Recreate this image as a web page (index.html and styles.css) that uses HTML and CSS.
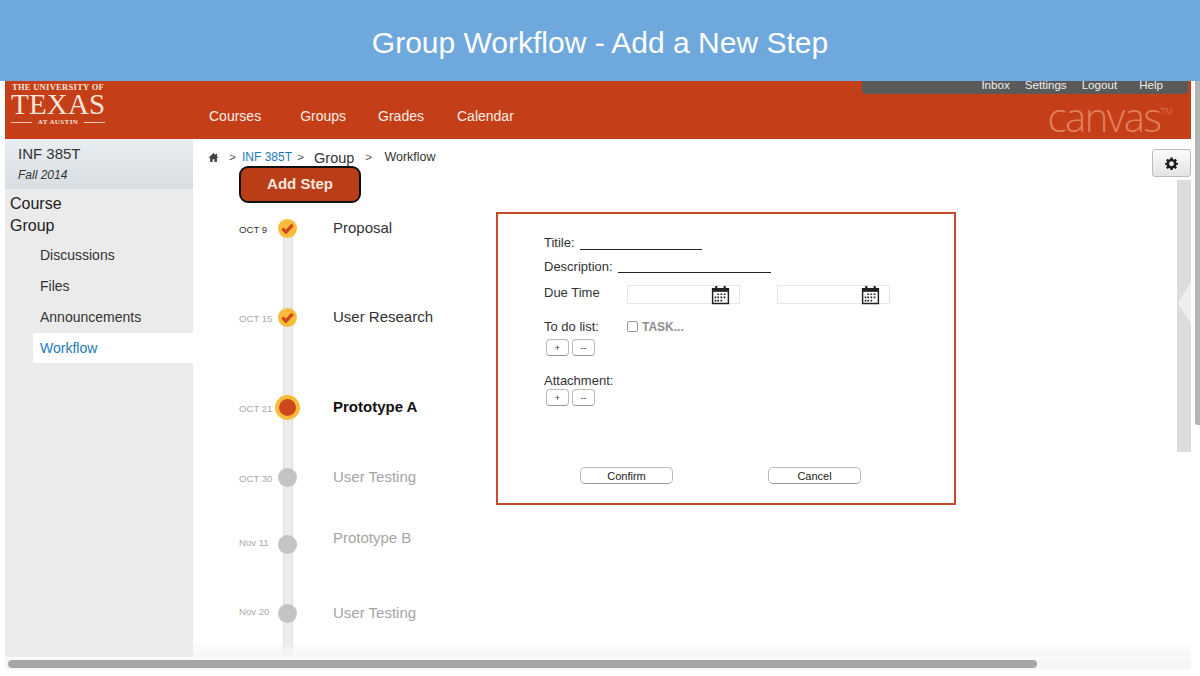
FILE: index.html
```html
<!DOCTYPE html>
<html lang="en">

<head>
    <title>Group Workflow - Add a New Step</title>
    <link rel="stylesheet" href="styles.css">
</head>

<body>
    <h1 class="banner">Group Workflow - Add a New Step</h1>

    <div class="app">
        <header class="topbar">
            <div class="logo">
                <div class="logo-top">THE UNIVERSITY OF</div>
                <div class="logo-main">TEXAS</div>
                <div class="logo-bottom"><i></i>AT AUSTIN<i></i></div>
            </div>
            <nav class="mainnav">
                <a>Courses</a>
                <a>Groups</a>
                <a>Grades</a>
                <a>Calendar</a>
            </nav>
            <div class="topright">
                <div class="usernav">
                    <a class="inbox">Inbox</a>
                    <a class="settings">Settings</a>
                    <a class="logout">Logout</a>
                    <a>Help</a>
                </div>
                <div class="brand">canvas<sup>TM</sup></div>
            </div>
        </header>

        <div class="columns">
            <aside class="sidebar">
                <div class="course">
                    <div class="course-name">INF 385T</div>
                    <div class="course-term">Fall 2014</div>
                </div>
                <div class="side-head">Course</div>
                <div class="side-head">Group</div>
                <ul class="sidelist">
                    <li>Discussions</li>
                    <li>Files</li>
                    <li>Announcements</li>
                    <li class="active">Workflow</li>
                </ul>
            </aside>

            <main class="content">
                <div class="crumbs">
                    <svg class="home" viewBox="0 0 12 12"><path d="M6 1 0.5 6.2H2.3V11H5V7.8H7V11H9.7V6.2H11.5L9.8 4.6V1.8H8.4V3.3Z"/></svg>
                    <span class="sep sep-first">&gt;</span>
                    <a class="crumb-link">INF 385T</a>
                    <span class="sep sep-tight">&gt;</span>
                    <span class="crumb-group">Group</span>
                    <span class="sep sep-wide">&gt;</span>
                    <span class="crumb-last">Workflow</span>
                </div>

                <button class="add-step" type="button">Add Step</button>

                <div class="body-row">
                    <ol class="timeline">
                        <li class="step step-1">
                            <span class="date date-now">OCT 9</span>
                            <span class="dot done"><svg viewBox="0 0 14 12"><path d="M1.5 6 5.2 10 12.5 2" /></svg></span>
                            <span class="step-name">Proposal</span>
                        </li>
                        <li class="step step-2">
                            <span class="date">OCT 15</span>
                            <span class="dot done"><svg viewBox="0 0 14 12"><path d="M1.5 6 5.2 10 12.5 2" /></svg></span>
                            <span class="step-name">User Research</span>
                        </li>
                        <li class="step step-3">
                            <span class="date">OCT 21</span>
                            <span class="dot current"></span>
                            <span class="step-name current-name">Prototype A</span>
                        </li>
                        <li class="step step-4">
                            <span class="date">OCT 30</span>
                            <span class="dot todo"></span>
                            <span class="step-name todo-name">User Testing</span>
                        </li>
                        <li class="step step-5">
                            <span class="date">Nov 11</span>
                            <span class="dot todo"></span>
                            <span class="step-name todo-name name-raised">Prototype B</span>
                        </li>
                        <li class="step step-6">
                            <span class="date">Nov 20</span>
                            <span class="dot todo"></span>
                            <span class="step-name todo-name">User Testing</span>
                        </li>
                    </ol>

                    <form class="dialog">
                        <div class="field field-title">
                            <label>Titile:</label><span class="line line-title"></span>
                        </div>
                        <div class="field field-desc">
                            <label>Description:</label><span class="line line-desc"></span>
                        </div>
                        <div class="field field-due">
                            <label class="due-label">Due Time</label>
                            <span class="datebox">
                                <svg class="cal" viewBox="0 0 18 19"><use href="#calendar"/></svg>
                            </span>
                            <span class="datebox">
                                <svg class="cal" viewBox="0 0 18 19"><use href="#calendar"/></svg>
                            </span>
                        </div>
                        <div class="field field-todo">
                            <label class="todo-label">To do list:</label>
                            <span class="checkbox"></span>
                            <span class="task">TASK...</span>
                        </div>
                        <div class="mini-row">
                            <button class="mini" type="button">+</button>
                            <button class="mini" type="button">--</button>
                        </div>
                        <div class="field field-attach">
                            <label>Attachment:</label>
                        </div>
                        <div class="mini-row mini-tight">
                            <button class="mini" type="button">+</button>
                            <button class="mini" type="button">--</button>
                        </div>
                        <div class="actions">
                            <button class="action" type="button">Confirm</button>
                            <button class="action" type="button">Cancel</button>
                        </div>
                    </form>
                </div>

                <button class="gear" type="button" aria-label="Settings">
                    <svg viewBox="0 0 24 24"><path fill-rule="evenodd" d="M10 1h4l.6 3.2 1.9.8 2.7-1.9 2.8 2.8-1.9 2.7.8 1.9L24 11v3l-3.1.6-.8 1.9 1.9 2.7-2.8 2.8-2.7-1.9-1.9.8L14 24h-4l-.6-3.1-1.9-.8-2.7 1.9-2.8-2.8 1.9-2.7-.8-1.9L0 14v-3l3.1-.5.8-1.9L2 5.9l2.8-2.8 2.7 1.9 1.9-.8zM12 8a4.5 4.5 0 1 0 0 9 4.5 4.5 0 0 0 0-9z"/></svg>
                </button>
                <div class="side-panel"><span class="panel-arrow"></span></div>
            </main>
        </div>
    </div>

    <div class="vscroll"></div>
    <div class="hscroll"><div class="hthumb"></div></div>

    <svg class="defs" width="0" height="0">
        <symbol id="calendar" viewBox="0 0 18 19">
            <path d="M1.5 3.5H16.5V17.5H1.5Z" fill="#fff" stroke="#222" stroke-width="1.4"/>
            <path d="M1 3H17V6.5H1Z" fill="#222"/>
            <path d="M4 1H6V4H4ZM12 1H14V4H12Z" fill="#222"/>
            <path d="M6 8h1.6v1.6H6zM9 8h1.6v1.6H9zM12 8h1.6v1.6H12zM3.5 11h1.6v1.6H3.5zM6 11h1.6v1.6H6zM9 11h1.6v1.6H9zM12 11h1.6v1.6H12zM3.5 14h1.6v1.6H3.5zM6 14h1.6v1.6H6zM9 14h1.6v1.6H9z" fill="#222"/>
        </symbol>
    </svg>
</body>

</html>
```

FILE: styles.css
```css
* {
    box-sizing: border-box;
}

html,
body {
    margin: 0;
    height: 676px;
    overflow: hidden;
}

body {
    position: relative;
    background-color: white;
    font-family: "Liberation Sans", Arial, sans-serif;
    color: #333;
}

.banner {
    position: relative;
    z-index: 2;
    margin: 0;
    height: 81px;
    background-color: #6fa8dc;
    color: white;
    font-size: 30px;
    font-weight: normal;
    line-height: 86px;
    text-align: center;
}

.app {
    margin-left: 5px;
    width: 1186px;
}

/* top red bar */
.topbar {
    display: flex;
    height: 58px;
    background-color: #c43e17;
    color: white;
}

.logo {
    width: 94px;
    margin-left: 6px;
    padding-top: 1px;
    color: #f7e4da;
    font-family: "Liberation Serif", serif;
    font-weight: bold;
    text-align: center;
}

.logo-top {
    font-size: 8.5px;
    line-height: 11px;
    letter-spacing: 0.3px;
    white-space: nowrap;
}

.logo-main {
    font-size: 29px;
    line-height: 22px;
    font-weight: normal;
    letter-spacing: 0.2px;
    white-space: nowrap;
}

.logo-bottom {
    display: flex;
    align-items: center;
    justify-content: space-between;
    margin-top: 2px;
    font-size: 7px;
    line-height: 10px;
    letter-spacing: 0.4px;
}

.logo-bottom i {
    width: 21px;
    height: 1px;
    background-color: #f0c9b8;
}

.mainnav {
    display: flex;
    margin-left: 104px;
    padding-top: 27px;
    font-size: 14px;
    line-height: 17px;
    color: #fbeee8;
}

.mainnav a {
    margin-right: 39px;
}

.mainnav a:nth-child(2) {
    margin-right: 32px;
}

.mainnav a:nth-child(3) {
    margin-right: 33px;
}

.topright {
    margin-left: auto;
    width: 329px;
}

.usernav {
    display: flex;
    justify-content: flex-end;
    height: 13px;
    width: 326px;
    padding-right: 25px;
    background-color: #5a5a5a;
    border-radius: 0 0 4px 4px;
    font-size: 11.6px;
    line-height: 7px;
    color: #eee;
}

.inbox {
    margin-right: 15px;
}

.settings {
    margin-right: 15px;
}

.logout {
    margin-right: 22px;
}

.brand {
    margin-top: 0;
    padding-right: 18px;
    text-align: right;
    font-family: "Open Sans", sans-serif;
    font-size: 40px;
    font-weight: 300;
    line-height: 45px;
    letter-spacing: -1.5px;
    color: #e27f5c;
}

.brand sup {
    font-size: 9px;
    vertical-align: 17px;
    line-height: 0;
    letter-spacing: 0;
}

.columns {
    display: flex;
    height: 518px;
}

/* left nav */
.sidebar {
    width: 188px;
    background-color: #ebebeb;
}

.course {
    height: 50px;
    padding: 6px 0 0 13px;
    background: linear-gradient(#e9eef2, #d9dee3);
}

.course-name {
    font-size: 15px;
    line-height: 18px;
}

.course-term {
    margin-top: 5px;
    font-size: 12px;
    line-height: 15px;
    font-style: italic;
}

.side-head {
    margin-left: 5px;
    font-size: 16px;
    line-height: 22px;
    color: #222;
}

.side-head:nth-child(2) {
    margin-top: 4px;
}

.sidelist {
    list-style: none;
    margin: 3px 0 0 28px;
    padding: 0;
    font-size: 14px;
}

.sidelist li {
    height: 31px;
    padding: 6px 0 0 7px;
    line-height: 18px;
}

.sidelist .active {
    height: 30px;
    background-color: white;
    color: #1a7ab8;
}

/* main area */
.content {
    position: relative;
    flex: 1;
    background-color: white;
}

.content::after {
    content: "";
    position: absolute;
    left: 0;
    right: 0;
    bottom: 0;
    height: 18px;
    background: linear-gradient(rgba(246, 246, 246, 0), #f6f6f6);
}

.crumbs {
    display: flex;
    align-items: center;
    height: 18px;
    margin: 9px 0 0 15px;
    font-size: 12.5px;
    color: #333;
}

.home {
    width: 11px;
    height: 11px;
    fill: #444;
}

.sep {
    color: #555;
    font-size: 12px;
    transform: scaleY(0.9);
}

.sep-first {
    margin: 0 6px 0 10px;
}

.sep-tight {
    margin: 0 10px 0 5px;
}

.sep-wide {
    margin: 0 12px 0 11px;
}

.crumb-link {
    color: #1a7ab8;
    font-size: 12px;
}

.crumb-group {
    font-size: 14.5px;
    margin-top: 1px;
}

.add-step {
    display: block;
    width: 122px;
    height: 37px;
    margin: 0 0 0 46px;
    padding-bottom: 3px;
    border: 2px solid #111;
    border-radius: 9px;
    background-color: #b93d16;
    color: #f6e6df;
    font-family: "Liberation Sans", sans-serif;
    font-size: 15px;
    font-weight: bold;
}

.body-row {
    display: flex;
    align-items: flex-start;
}

/* workflow timeline */
.timeline {
    position: relative;
    list-style: none;
    width: 303px;
    margin: 0;
    padding: 0;
}

.timeline::before {
    content: "";
    position: absolute;
    left: 90px;
    top: 25px;
    bottom: -32px;
    width: 8px;
    background-color: #ececec;
    border-left: 1px solid #dedede;
    border-right: 1px solid #dedede;
}

.step {
    position: relative;
    display: flex;
    align-items: center;
    height: 24px;
}

.step-1 {
    margin-top: 12px;
}

.step-2 {
    margin-top: 65px;
}

.step-3 {
    margin-top: 66px;
}

.step-4 {
    margin-top: 46px;
}

.step-5 {
    margin-top: 43px;
}

.step-6 {
    margin-top: 45px;
}

.date {
    width: 36px;
    margin: 5px 0 0 46px;
    font-size: 9.6px;
    color: #aaa;
    white-space: nowrap;
}

.date-now {
    color: #333;
}

.step-5 .date,
.step-6 .date {
    margin-top: -1px;
}

.dot {
    position: relative;
    display: flex;
    align-items: center;
    justify-content: center;
    flex: none;
    width: 19px;
    height: 19px;
    margin: 2px 1px 0 3px;
    border-radius: 50%;
}

.done {
    background-color: #fbbb3a;
}

.done svg {
    width: 13px;
    height: 11px;
    fill: none;
    stroke: #c9451b;
    stroke-width: 3.4;
}

.current {
    width: 25px;
    height: 25px;
    margin: 2px -2px 0 0;
    border: 4px solid #fbbb3a;
    background-color: #c9481c;
}

.todo {
    background-color: #c4c4c4;
}

.step-name {
    margin-left: 35px;
    font-size: 15px;
    white-space: nowrap;
    color: #333;
}

.current-name {
    font-weight: bold;
    color: #111;
}

.todo-name {
    color: #a5a5a5;
}

.name-raised {
    margin-bottom: 12px;
}

/* add step dialog */
.dialog {
    width: 460px;
    height: 293px;
    margin-top: 9px;
    padding: 21px 0 0 46px;
    border: 2px solid #c8492a;
    background-color: white;
    font-size: 13px;
    color: #333;
}

.field {
    display: flex;
    align-items: flex-start;
}

.field label {
    line-height: 15px;
}

.line {
    border-bottom: 1px solid #222;
    height: 15px;
}

.line-title {
    width: 122px;
    margin-left: 5px;
}

.line-desc {
    width: 153px;
    height: 14px;
    margin-left: 5px;
}

.field-desc {
    margin-top: 9px;
}

.field-due {
    margin-top: 11px;
    height: 20px;
}

.due-label {
    width: 83px;
}

.datebox {
    position: relative;
    width: 113px;
    height: 19px;
    margin-right: 37px;
    border: 1px solid #e6e6e6;
}

.cal {
    position: absolute;
    right: 9px;
    top: -1px;
    width: 19px;
    height: 20px;
}

.field-todo {
    margin-top: 14px;
}

.todo-label {
    width: 83px;
}

.checkbox {
    width: 11px;
    height: 11px;
    margin-top: 2px;
    border: 1px solid #999;
    border-radius: 2px;
}

.task {
    margin-left: 4px;
    font-size: 12px;
    line-height: 16px;
    font-weight: bold;
    color: #8f8f8f;
}

.mini-row {
    display: flex;
    gap: 3px;
    margin: 4px 0 0 2px;
}

.mini-tight {
    margin-top: 1px;
}

.mini {
    width: 23px;
    height: 17px;
    padding: 0;
    border: 1px solid #bbb;
    border-bottom-color: #999;
    border-radius: 4px;
    background-color: white;
    font-family: "Liberation Sans", sans-serif;
    font-size: 9px;
    color: #333;
}

.field-attach {
    margin-top: 17px;
}

.actions {
    display: flex;
    gap: 95px;
    margin: 61px 0 0 36px;
}

.action {
    width: 93px;
    height: 17px;
    padding: 0;
    border: 1px solid #bbb;
    border-bottom-color: #999;
    border-radius: 5px;
    background-color: white;
    font-family: "Liberation Sans", sans-serif;
    font-size: 11px;
    color: #222;
}

/* right side */
.gear {
    position: absolute;
    top: 10px;
    right: 0;
    width: 39px;
    height: 28px;
    padding: 0;
    border: 1px solid #bbb;
    border-radius: 3px;
    background: linear-gradient(#fbfbfb, #e4e4e4);
}

.gear svg {
    display: block;
    width: 13px;
    height: 13px;
    margin: 0 auto;
    fill: #1c1c1c;
}

.side-panel {
    position: absolute;
    top: 41px;
    right: 0;
    width: 14px;
    height: 272px;
    background-color: #dcdcdc;
}

.panel-arrow {
    position: absolute;
    top: 102px;
    left: 1px;
    border-top: 21px solid transparent;
    border-bottom: 21px solid transparent;
    border-right: 13px solid #eeeeee;
}

.vscroll {
    position: absolute;
    top: 81px;
    right: 0;
    width: 5px;
    height: 344px;
    background-color: #b4b4b4;
    border-radius: 0 0 0 3px;
}

.hscroll {
    position: absolute;
    left: 5px;
    top: 658px;
    width: 1186px;
    height: 12px;
    padding: 2px 0 0 3px;
    background-color: #f7f7f7;
}

.hthumb {
    width: 1029px;
    height: 8px;
    background-color: #a6a6a6;
    border-radius: 4px;
}

.defs {
    position: absolute;
}
```
